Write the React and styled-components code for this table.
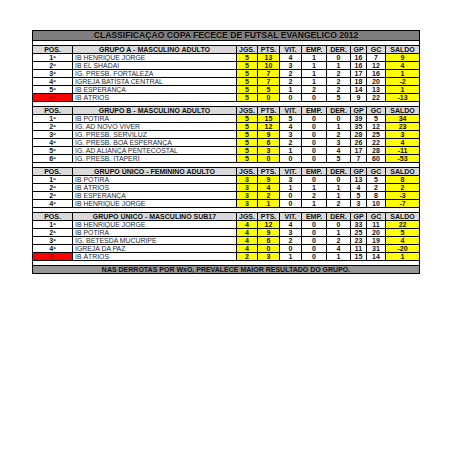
import React from 'react';
import styled, { createGlobalStyle } from 'styled-components';

const GlobalStyle = createGlobalStyle`
  html, body {
    margin: 0;
    padding: 0;
    background: #ffffff;
  }
  body {
    font-family: "Liberation Sans", Arial, sans-serif;
  }
`;

const groups = [
  {
    title: 'GRUPO A - MASCULINO ADULTO',
    rows: [
      ['1º', 'IB HENRIQUE JORGE', 5, 13, 4, 1, 0, 16, 7, 9],
      ['2º', 'IB EL SHADAI', 5, 10, 3, 1, 1, 16, 12, 4],
      ['3º', 'IG. PRESB. FORTALEZA', 5, 7, 2, 1, 2, 17, 16, 1],
      ['4º', 'IGREJA BATISTA CENTRAL', 5, 7, 2, 1, 2, 18, 20, -2],
      ['5º', 'IB ESPERANÇA', 5, 5, 1, 2, 2, 14, 13, 1],
      ['6º', 'IB ÁTRIOS', 5, 0, 0, 0, 5, 9, 22, -13, true],
    ],
  },
  {
    title: 'GRUPO B - MASCULINO ADULTO',
    rows: [
      ['1º', 'IB POTIRA', 5, 15, 5, 0, 0, 39, 5, 34],
      ['2º', 'IG. AD NOVO VIVER', 5, 12, 4, 0, 1, 35, 12, 23],
      ['3º', 'IG. PRESB. SERVILUZ', 5, 9, 3, 0, 2, 28, 25, 3],
      ['4º', 'IG. PRESB. BOA ESPERANÇA', 5, 6, 2, 0, 3, 26, 22, 4],
      ['5º', 'IG. AD ALIANÇA PENTECOSTAL', 5, 3, 1, 0, 4, 17, 28, -11],
      ['6º', 'IG. PRESB. ITAPERÍ', 5, 0, 0, 0, 5, 7, 60, -53],
    ],
  },
  {
    title: 'GRUPO ÚNICO - FEMININO ADULTO',
    rows: [
      ['1º', 'IB POTIRA', 3, 9, 3, 0, 0, 13, 5, 8],
      ['2º', 'IB ÁTRIOS', 3, 4, 1, 1, 1, 4, 2, 2],
      ['2º', 'IB ESPERANÇA', 3, 2, 0, 2, 1, 5, 8, -3],
      ['4º', 'IB HENRIQUE JORGE', 3, 1, 0, 1, 2, 3, 10, -7],
    ],
  },
  {
    title: 'GRUPO ÚNICO - MASCULINO SUB17',
    rows: [
      ['1º', 'IB HENRIQUE JORGE', 4, 12, 4, 0, 0, 33, 11, 22],
      ['2º', 'IB POTIRA', 4, 9, 3, 0, 1, 25, 20, 5],
      ['3º', 'IG. BETESDA MUCURIPE', 4, 6, 2, 0, 2, 23, 19, 4],
      ['4º', 'IGREJA DA PAZ', 4, 0, 0, 0, 4, 11, 31, -20],
      ['5º', 'IB ÁTRIOS', 2, 3, 1, 0, 1, 15, 14, 1, true],
    ],
  },
];

const widths = [40, 164, 21, 22, 22, 25, 24, 16, 19, 34];
const statHeads = ['JGS.', 'PTS.', 'VIT.', 'EMP.', 'DER.', 'GP', 'GC', 'SALDO'];
const yellowCols = [0, 1, 7];

const Page = styled.div`
  padding: 30px 0 0 32px;
`;

const Table = styled.table`
  border-collapse: collapse;
  table-layout: fixed;
  width: 387px;
  border: 1px solid #000;
`;

const TitleCell = styled.td`
  background: #7f7f7f;
  color: #111;
  font-weight: bold;
  font-size: 8.6px;
  height: 9px;
  line-height: 9px;
  text-align: center;
  padding: 0;
  border-bottom: 1px solid #000;
  white-space: nowrap;
`;

const SpacerCell = styled.td`
  height: 4px;
  padding: 0;
  background: #fff;
  border: none;
`;

const Cell = styled.td`
  height: 7px;
  padding: 0;
  line-height: 7px;
  font-size: 7px;
  font-weight: bold;
  text-align: center;
  border: 1px solid #000;
  white-space: nowrap;
  color: #141414;
  background: ${(p) => (p.$red ? '#ff0000' : p.$yellow ? '#ffff00' : '#ffffff')};
  ${(p) => p.$red && 'color: #b00000;'}
`;

const HeadCell = styled(Cell)`
  background: #d9d9d9;
  color: #111;
`;

const NameCell = styled(Cell)`
  text-align: left;
  padding-left: 2px;
  font-weight: normal;
  color: #262a3a;
  font-size: 6.9px;
`;

const FooterCell = styled.td`
  background: #969696;
  color: #111;
  font-weight: bold;
  font-size: 7px;
  height: 7px;
  line-height: 7px;
  padding: 0;
  text-align: center;
  border-top: 1px solid #000;
  white-space: nowrap;
`;

const Group = ({ group }) => (
  <>
    <tr>
      <HeadCell>POS.</HeadCell>
      <HeadCell>{group.title}</HeadCell>
      {statHeads.map((h) => (
        <HeadCell key={h}>{h}</HeadCell>
      ))}
    </tr>
    {group.rows.map((r, i) => {
      const [pos, name, ...stats] = r;
      const red = r[10] === true;
      return (
        <tr key={i}>
          <Cell $red={red}>{pos}</Cell>
          <NameCell>{name}</NameCell>
          {stats.slice(0, 8).map((v, j) => (
            <Cell key={j} $yellow={yellowCols.includes(j)}>
              {v}
            </Cell>
          ))}
        </tr>
      );
    })}
    <tr>
      <SpacerCell colSpan={10} />
    </tr>
  </>
);

export default function App() {
  return (
    <>
      <GlobalStyle />
      <Page>
        <Table>
          <colgroup>
            {widths.map((w, i) => (
              <col key={i} style={{ width: w }} />
            ))}
          </colgroup>
          <tbody>
            <tr>
              <TitleCell colSpan={10}>CLASSIFICAÇÃO COPA FECECE DE FUTSAL EVANGÉLICO 2012</TitleCell>
            </tr>
            <tr>
              <SpacerCell colSpan={10} />
            </tr>
            {groups.map((g) => (
              <Group key={g.title} group={g} />
            ))}
            <tr>
              <FooterCell colSpan={10}>NAS DERROTAS POR WxO, PREVALECE MAIOR RESULTADO DO GRUPO.</FooterCell>
            </tr>
          </tbody>
        </Table>
      </Page>
    </>
  );
}
